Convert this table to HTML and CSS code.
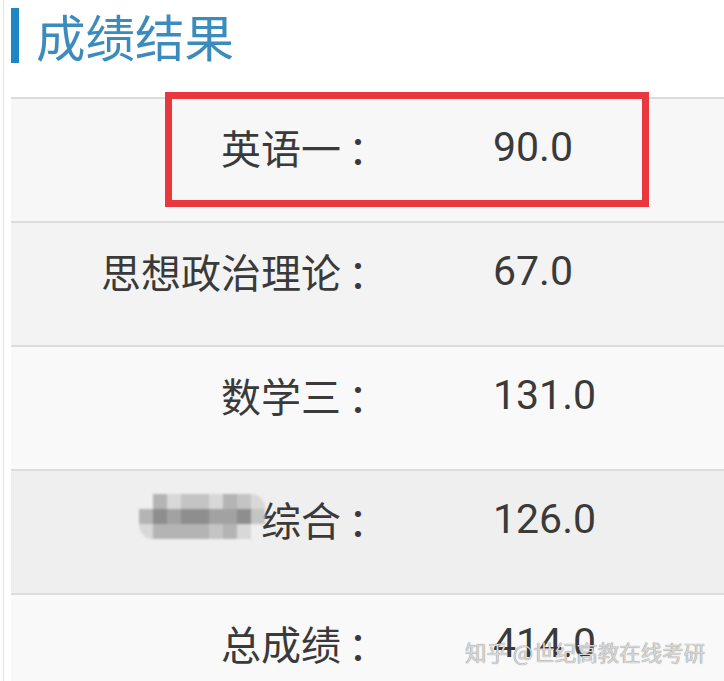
FILE: index.html
```html
<!DOCTYPE html>
<html lang="zh-CN">
<head>
    <meta charset="UTF-8" />
    <meta name="viewport" content="width=device-width, initial-scale=1.0"/>
    <title>成绩结果</title>
    <link rel="stylesheet" href="styles.css">
</head>
<body>
<div class="page">
    <header class="title">
        <span class="title-bar"></span>
        <h1>成绩结果</h1>
    </header>

    <div class="scores">
        <div class="row row-a">
            <div class="label">英语一<span class="colon">：</span></div>
            <div class="value">90.0</div>
        </div>
        <div class="row row-b">
            <div class="label">思想政治理论<span class="colon">：</span></div>
            <div class="value">67.0</div>
        </div>
        <div class="row row-c">
            <div class="label">数学三<span class="colon">：</span></div>
            <div class="value">131.0</div>
        </div>
        <div class="row row-d">
            <div class="label">
                <span class="mosaic" aria-hidden="true">
                    <i class="s0"></i><i class="s3"></i><i class="s1"></i><i class="s2"></i><i class="s2"></i><i class="s1"></i><i class="s3"></i><i class="s2"></i><i class="s1"></i>
                    <i class="s3"></i><i class="s5"></i><i class="s4"></i><i class="s5"></i><i class="s5"></i><i class="s4"></i><i class="s4"></i><i class="s5"></i><i class="s2"></i>
                    <i class="s1"></i><i class="s3"></i><i class="s3"></i><i class="s3"></i><i class="s3"></i><i class="s2"></i><i class="s3"></i><i class="s1"></i><i class="s0"></i>
                </span>
                <span>综合</span><span class="colon">：</span>
            </div>
            <div class="value">126.0</div>
        </div>
        <div class="row row-e">
            <div class="label">总成绩<span class="colon">：</span></div>
            <div class="value">414.0</div>
        </div>
    </div>

    <!-- annotation drawn over the first row -->
    <div class="highlight"></div>
    <div class="watermark">知乎 @世纪高教在线考研</div>
</div>
</body>
</html>
```

FILE: styles.css
```css
body {
    margin: 0;
    padding: 0;
    background-color: #fff;
    color: #3a3a3a;
    font-family: 'Noto Sans CJK SC', 'Noto Sans', sans-serif;
    overflow: hidden;
}

.page {
    position: relative;
    margin-left: 3px;
    padding-left: 7px;
    border-left: 1px solid #e4e4e4;
    height: 681px;
    overflow: hidden;
}

.title {
    display: flex;
    align-items: center;
    height: 71px;
    margin-bottom: 26px;
}

.title-bar {
    width: 8px;
    height: 55px;
    background-color: #1c87c4;
}

.title h1 {
    margin: 0 0 0 17px;
    font-size: 49.5px;
    font-weight: 400;
    line-height: 55px;
    color: #3c8bbd;
}

.row {
    display: flex;
    height: 40px;
    border-top: 2px solid #dcdcdc;
    padding: 28px 0 54px;
    line-height: 40px;
    font-size: 40px;
}

.row-a { background-color: #f7f7f7; }
.row-b { background-color: #f3f3f3; }
.row-c { background-color: #f9f9f9; }
.row-d { background-color: #efefef; }
.row-e { background-color: #f9f9f9; }

.label {
    display: flex;
    align-items: center;
    justify-content: flex-end;
    width: 377px;
    white-space: nowrap;
}

.colon {
    margin-left: 7px;
}

.value {
    margin-left: 105px;
    font-family: Roboto, 'Liberation Sans', sans-serif;
    font-size: 41px;
}

.mosaic {
    display: grid;
    grid-template-columns: repeat(9, 14px);
    grid-template-rows: repeat(3, 15px);
    margin: -6px -4px 0 0;
    border-radius: 14px;
    overflow: hidden;
    filter: blur(1px);
}

.mosaic i { display: block; }
.mosaic .s0 { background: transparent; }
.mosaic .s1 { background: #d8d8d8; }
.mosaic .s2 { background: #c4c4c4; }
.mosaic .s3 { background: #b4b4b4; }
.mosaic .s4 { background: #a2a2a2; }
.mosaic .s5 { background: #8e8e8e; }

.highlight {
    position: absolute;
    left: 161px;
    top: 92px;
    width: 470px;
    height: 101px;
    border: 7px solid #e8383d;
}

.watermark {
    position: absolute;
    left: 461px;
    top: 636px;
    font-size: 21.5px;
    color: #d6d6d6;
    white-space: nowrap;
    text-shadow: 0 0 1px rgba(0, 0, 0, 0.55);
}
```
